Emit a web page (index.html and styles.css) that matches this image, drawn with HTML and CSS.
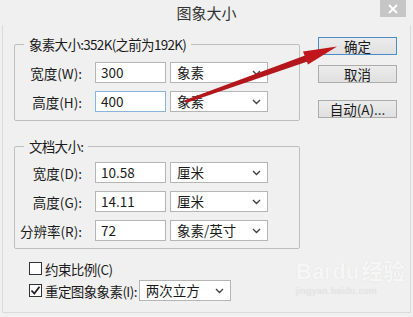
FILE: index.html
```html
<!DOCTYPE html>
<html lang="zh-CN">
  <head>
    <meta charset="UTF-8" />
    <title>图象大小</title>
    <link rel="stylesheet" href="styles.css">
  </head>
  <body>
    <div class="titlebar">
      <span class="title">图象大小</span>
      <span class="close">
        <svg width="10" height="10" viewBox="0 0 10 10"><path d="M1 1L9 9M9 1L1 9" stroke="#fff" stroke-width="1.8"/></svg>
      </span>
    </div>

    <div class="window">
      <div class="left">
        <fieldset class="group g1">
          <legend>象素大小:352K(之前为192K)</legend>
          <div class="row">
            <label>宽度(W):</label>
            <div class="field">300</div>
            <div class="select">象素<svg class="chev" width="9" height="6" viewBox="0 0 9 6"><path d="M1 1L4.5 4.5L8 1" fill="none" stroke="#444" stroke-width="1.4"/></svg></div>
          </div>
          <div class="row">
            <label>高度(H):</label>
            <div class="field focus">400</div>
            <div class="select">象素<svg class="chev" width="9" height="6" viewBox="0 0 9 6"><path d="M1 1L4.5 4.5L8 1" fill="none" stroke="#444" stroke-width="1.4"/></svg></div>
          </div>
        </fieldset>

        <fieldset class="group g2">
          <legend>文档大小:</legend>
          <div class="row">
            <label>宽度(D):</label>
            <div class="field">10.58</div>
            <div class="select">厘米<svg class="chev" width="9" height="6" viewBox="0 0 9 6"><path d="M1 1L4.5 4.5L8 1" fill="none" stroke="#444" stroke-width="1.4"/></svg></div>
          </div>
          <div class="row">
            <label>高度(G):</label>
            <div class="field">14.11</div>
            <div class="select">厘米<svg class="chev" width="9" height="6" viewBox="0 0 9 6"><path d="M1 1L4.5 4.5L8 1" fill="none" stroke="#444" stroke-width="1.4"/></svg></div>
          </div>
          <div class="row">
            <label>分辨率(R):</label>
            <div class="field">72</div>
            <div class="select">象素/英寸<svg class="chev" width="9" height="6" viewBox="0 0 9 6"><path d="M1 1L4.5 4.5L8 1" fill="none" stroke="#444" stroke-width="1.4"/></svg></div>
          </div>
        </fieldset>

        <div class="checks">
          <div class="check-row">
            <span class="box"></span>
            <span class="check-label">约束比例(C)</span>
          </div>
          <div class="check-row">
            <span class="box">
              <svg width="11" height="11" viewBox="0 0 11 11"><path d="M1.5 5.5L4.3 8.5L9.5 1.8" fill="none" stroke="#222" stroke-width="1.8"/></svg>
            </span>
            <span class="check-label">重定图象象素(I):</span>
            <div class="select small">两次立方<svg class="chev" width="9" height="6" viewBox="0 0 9 6"><path d="M1 1L4.5 4.5L8 1" fill="none" stroke="#444" stroke-width="1.4"/></svg></div>
          </div>
        </div>
      </div>

      <div class="buttons">
        <div class="btn default">确定</div>
        <div class="btn">取消</div>
        <div class="btn auto">自动(A)...</div>
      </div>
    </div>

    <svg class="arrow" width="413" height="317" viewBox="0 0 413 317">
      <polygon points="184,100.5 305,55.5 307.5,61.5 186,103" fill="#b3161b"/>
      <polygon points="337,46.5 303,51.5 308,64.5" fill="#c0161c"/>
    </svg>

    <div class="watermark">
      <div class="wm-big">Bai<span class="paw">du</span>经验</div>
      <div class="wm-small">jingyan.baidu.com</div>
    </div>
  </body>
</html>
```

FILE: styles.css
```css
body {
  margin: 0;
  width: 413px;
  height: 317px;
  background: #f0f0f0;
  font-family: "Noto Sans CJK SC", "Noto Sans", sans-serif;
  font-size: 13.5px;
  color: #1b1b1b;
  position: relative;
  overflow: hidden;
}

.titlebar {
  height: 25px;
  display: flex;
  justify-content: center;
  align-items: center;
  position: relative;
}

.title {
  font-size: 15px;
  color: #333;
}

.close {
  position: absolute;
  top: 0;
  right: 7px;
  width: 26px;
  height: 17px;
  background: #c6c6c6;
  display: flex;
  align-items: center;
  justify-content: center;
}

.window {
  margin: 0 2px;
  height: 287px;
  border: 1px solid #dadada;
  border-top: none;
  display: flex;
  align-items: flex-start;
  padding: 0 0 0 11px;
}

.left {
  width: 286px;
  padding-top: 9px;
}

.group {
  margin: 0;
  padding: 0 0 8px 0;
  border: 1px solid #bfbfbf;
  border-radius: 2px;
  display: flex;
  flex-direction: column;
  gap: 8px;
}

.group legend {
  margin-left: 9px;
  padding: 0 5px;
  height: 20px;
  line-height: 20px;
  letter-spacing: -0.7px;
}

.g1 {
  padding-top: 8px;
}

.g2 {
  margin-top: 15px;
  padding-top: 6px;
  padding-bottom: 7px;
}

.row {
  display: flex;
  align-items: center;
  height: 21px;
}

.row label {
  width: 67px;
  text-align: right;
  margin-right: 13px;
}

.field {
  width: 64px;
  height: 19px;
  line-height: 19px;
  padding-left: 5px;
  background: #fff;
  border: 1px solid #b5b5b5;
}

.field.focus {
  border-color: #8ab4dc;
}

.select {
  margin-left: 4px;
  width: 90px;
  height: 19px;
  line-height: 19px;
  padding-left: 6px;
  background: #fff;
  border: 1px solid #b5b5b5;
  position: relative;
}

.chev {
  position: absolute;
  right: 6px;
  top: 7px;
}

.checks {
  padding: 9px 0 0 15px;
  display: flex;
  flex-direction: column;
  gap: 1px;
}

.check-row {
  display: flex;
  align-items: center;
  height: 21px;
}

.check-label {
  letter-spacing: -0.6px;
}

.box {
  width: 11px;
  height: 11px;
  border: 1px solid #333;
  background: #fff;
  margin-right: 3px;
  display: flex;
}

.select.small {
  width: 84px;
  margin-left: 2px;
}

.buttons {
  margin-left: 18px;
  padding-top: 12px;
  display: flex;
  flex-direction: column;
}

.btn {
  width: 77px;
  height: 16px;
  line-height: 16px;
  text-align: center;
  border: 1px solid #acacac;
  background: linear-gradient(#ececec, #e0e0e0);
  margin-bottom: 10px;
}

.btn.default {
  border-color: #4a8cc4;
}

.btn.auto {
  margin-top: 7px;
}

.arrow {
  position: absolute;
  top: 0;
  left: 0;
  pointer-events: none;
}

.watermark {
  position: absolute;
  left: 296px;
  top: 258px;
  color: #f6f6f6;
  text-shadow: 0 0 1px #dadada;
  font-family: "Liberation Sans", "Noto Sans CJK SC", sans-serif;
}

.wm-big {
  font-size: 22px;
  font-weight: bold;
  line-height: 28px;
}

.paw {
  margin: 0 2px;
}

.wm-small {
  font-size: 9px;
  color: #e6e6e6;
  letter-spacing: 0.5px;
}
```
